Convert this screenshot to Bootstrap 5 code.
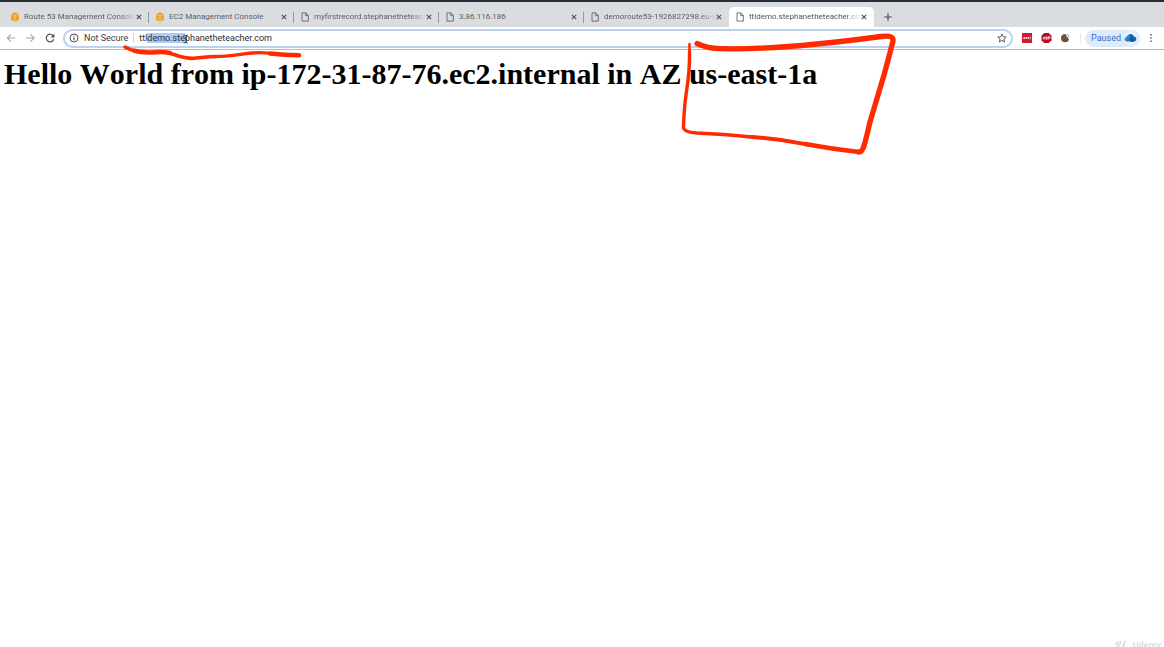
<!DOCTYPE html>
<html lang="en">
<head>
<meta charset="utf-8">
<meta name="viewport" content="width=device-width, initial-scale=1">
<title>ttldemo.stephanetheteacher.com</title>
<link href="https://cdn.jsdelivr.net/npm/bootstrap@5.3.0/dist/css/bootstrap.min.css" rel="stylesheet">
<style>
body { font-family: Roboto, "Liberation Sans", sans-serif; font-size: 9px; line-height: 12px; color: #3c4043; background: #fff; overflow: hidden; }
svg { display: block; flex: none; }
button { border: 0; background: none; padding: 0; color: inherit; }
.tabstrip { border-top: 2px solid #282e39; background: #dadde0; height: 27px; padding: 5px 0 0 4px; }
.browser-tab { flex: 0 1 145px; min-width: 0; height: 20px; padding: 0 7px 0 6px; position: relative; color: #5a5e62; font-size: 8px; }
.browser-tab.divided::after { content: ""; position: absolute; right: 0; top: 5px; width: 1px; height: 11px; background: #93979b; }
.browser-tab.current { background: #fff; border-radius: 5px 5px 0 0; color: #505458; }
.tab-label { flex: 1; min-width: 0; text-align: left; margin-left: 4px; overflow: hidden; white-space: nowrap; }
.tab-label.faded { -webkit-mask-image: linear-gradient(90deg, #000 86%, transparent); mask-image: linear-gradient(90deg, #000 86%, transparent); }
.toolbar { height: 23px; border-bottom: 1px solid #b9bbbe; padding: 0 10px 0 6px; }
.nav-gap { margin-left: 10px; }
.omnibox { height: 19px; border: 2px solid #bcd2ee; border-radius: 10px; padding: 0 4px; margin-left: 8px; }
.omnibox input { border: 0; outline: 0; padding: 0; height: 14px; background: none; color: #2c2f33; min-width: 0; }
.omnibox input::selection { background: #a9cdf8; color: #2c2f33; }
.omnibox label { margin-left: 5px; }
.rule { width: 1px; height: 10px; margin: 0 5px; background: #d3d5d8; }
.rule.faint { margin: 0 4px 0 10px; background: #e4e6e8; }
.profile { height: 17px; border-radius: 9px; background: #dfeafb; color: #2f6fd0; padding: 0 2px 0 6px; gap: 2px; }
.page-title { font: bold 30px/34px "Liberation Serif", serif; font-kerning: none; color: #000; padding: 7px 4px 0; margin: 0; white-space: nowrap; }
.drawing { position: absolute; left: 0; top: 0; pointer-events: none; }
.watermark { position: fixed; right: 3px; bottom: -4px; color: #dcdcdc; font: bold 8px/12px "Open Sans", sans-serif; }
</style>
</head>
<body>
<svg width="0" height="0" class="position-absolute" aria-hidden="true">
  <symbol id="cube" viewBox="0 0 10 10"><path d="M1 2 5 .5 9 2v6L5 9.500 1 8z" fill="#eda52c"/><path d="M1 2.300 5 3.400 9 2.300M5 3.400v6" stroke="#f8ce78" stroke-width=".8" fill="none"/><path d="M3 1.400 7 2.800M7 1.400 3 2.800" stroke="#d58c1c" stroke-width=".5"/></symbol>
  <symbol id="file" viewBox="0 0 10 10"><path d="M2 .9h3.800L8.300 3.400v5.700H2zM5.700 1v2.600h2.500" fill="none" stroke="#606468" stroke-width=".9"/></symbol>
  <symbol id="close" viewBox="0 0 6 6"><path d="M.8.8l4.400 4.400M5.200.8.8 5.200" stroke="#4e5256" stroke-width="1.100"/></symbol>
</svg>
<header>
  <nav class="tabstrip d-flex" aria-label="Open tabs">
    <div class="browser-tab divided d-flex align-items-center"><svg width="10" height="10"><use href="#cube"/></svg><button class="tab-label faded">Route 53 Management Console</button><button aria-label="Close tab"><svg width="6" height="6"><use href="#close"/></svg></button></div>
    <div class="browser-tab divided d-flex align-items-center"><svg width="10" height="10"><use href="#cube"/></svg><button class="tab-label">EC2 Management Console</button><button aria-label="Close tab"><svg width="6" height="6"><use href="#close"/></svg></button></div>
    <div class="browser-tab divided d-flex align-items-center"><svg width="10" height="10"><use href="#file"/></svg><button class="tab-label faded">myfirstrecord.stephanetheteacher.com</button><button aria-label="Close tab"><svg width="6" height="6"><use href="#close"/></svg></button></div>
    <div class="browser-tab divided d-flex align-items-center"><svg width="10" height="10"><use href="#file"/></svg><button class="tab-label">3.86.116.186</button><button aria-label="Close tab"><svg width="6" height="6"><use href="#close"/></svg></button></div>
    <div class="browser-tab d-flex align-items-center"><svg width="10" height="10"><use href="#file"/></svg><button class="tab-label faded">demoroute53-1926827298.eu-west-1</button><button aria-label="Close tab"><svg width="6" height="6"><use href="#close"/></svg></button></div>
    <div class="browser-tab current d-flex align-items-center"><svg width="10" height="10"><use href="#file"/></svg><button class="tab-label faded" aria-current="page">ttldemo.stephanetheteacher.com</button><button aria-label="Close tab"><svg width="6" height="6"><use href="#close"/></svg></button></div>
    <button class="nav-gap" aria-label="New tab"><svg width="8" height="8" viewBox="0 0 8 8"><path d="M4 .3v7.400M.3 4h7.400" stroke="#484c50" stroke-width="1.200"/></svg></button>
  </nav>
  <div class="toolbar d-flex align-items-center">
    <button aria-label="Back"><svg width="10" height="10" viewBox="0 0 10 10"><path d="M9.300 5H1.500M5 1.300 1.300 5 5 8.700" fill="none" stroke="#a5a8ab" stroke-width="1.100"/></svg></button>
    <button class="nav-gap" aria-label="Forward"><svg width="9" height="10" viewBox="0 0 9 10"><path d="M.2 5h7.800M4.500 1.300 8.200 5 4.500 8.700" fill="none" stroke="#a5a8ab" stroke-width="1.100"/></svg></button>
    <button class="nav-gap" aria-label="Reload"><svg width="10" height="10" viewBox="0 0 10 10"><path d="M8.300 3A3.800 3.800 0 1 0 8.700 6.200" fill="none" stroke="#4d5155" stroke-width="1.200"/><path d="M9.400.7v3.700H5.700z" fill="#4d5155"/></svg></button>
    <div class="omnibox flex-grow-1 d-flex align-items-center">
      <svg width="10" height="10" viewBox="0 0 10 10"><circle cx="5" cy="5" r="4" fill="none" stroke="#4d5155"/><path d="M5 4.300v3M5 2.400v1.100" stroke="#4d5155" stroke-width="1.100"/></svg>
      <label for="url" class="text-nowrap">Not Secure</label>
      <span class="rule"></span>
      <input id="url" class="flex-grow-1" type="text" value="ttldemo.stephanetheteacher.com" spellcheck="false">
      <button aria-label="Bookmark this page"><svg width="10" height="10" viewBox="0 0 10 10"><path d="M5 .9l1.200 2.800 3 .3-2.300 2 .7 3L5 7.400 2.400 9l.7-3L.8 4l3-.3z" fill="none" stroke="#4d5155" stroke-width=".9"/></svg></button>
    </div>
    <div class="d-flex align-items-center ms-2 gap-2">
      <button aria-label="Password manager"><svg width="12" height="10" viewBox="0 0 12 10"><path d="M1 0h10v10H1z" fill="#cf1b2e"/><path d="M2.500 5h5.500" stroke="#fff" stroke-width="1.500" stroke-dasharray="1.500 .5"/><path d="M9.200 3.500v3" stroke="#fff" stroke-width=".7"/></svg></button>
      <button aria-label="Ad blocker"><svg width="11" height="10" viewBox="0 0 11 10"><path d="M3.200 0h4.600l2.700 2.700v4.600L7.800 10H3.200L.5 7.300V2.700z" fill="#b70d20"/><path d="M2 6.400 3 3.800l1 2.600M5 3.800v2.400h1V3.800zM7.200 6.500V3.800H9v1.400H7.500" fill="none" stroke="#fff" stroke-width=".8"/></svg></button>
      <button aria-label="Cookies"><svg width="10" height="10" viewBox="0 0 10 10"><path d="M5.200.9a4.200 4.200 0 1 0 4 5.400L7.800 5.500 8.600 4.200 6.500 4 6.700 2.300z" fill="#72563b"/><path d="M7.500 1.500h1v1h-1zM8.400 3.300h.8v.8h-.8z" fill="#72563b"/><circle cx="3" cy="4" r=".6" fill="#4a3826"/><circle cx="5" cy="7" r=".6" fill="#4a3826"/></svg></button>
    </div>
    <span class="rule faint"></span>
    <button class="profile d-flex align-items-center"><span>Paused</span><svg width="15" height="14" viewBox="0 0 15 14"><circle cx="7.500" cy="7" r="6.500" fill="#edf3fc"/><path d="M3.500 10.500a2.300 2.300 0 0 1-.2-4.500Q4.500 3 7.300 3.200v7.300z" fill="#318bd0"/><path d="M6.500 3.200Q10 2.400 11 5.600q2.600.4 2.300 2.700-.3 2.200-2.300 2.200H6.500z" fill="#1666ae"/><path d="M5 10.500V7.500M8.300 10.500V6l2 4.500z" fill="#184d7b" stroke="#184d7b" stroke-width=".6"/></svg></button>
    <button class="ms-2" aria-label="Menu"><svg width="6" height="10" viewBox="0 0 6 10"><path d="M2.300 1h1.400v1.400H2.300zM2.300 4.300h1.400v1.400H2.300zM2.300 7.600h1.400V9H2.300z" fill="#505458"/></svg></button>
  </div>
</header>
<main>
  <h1 class="page-title">Hello World from ip-172-31-87-76.ec2.internal in AZ us-east-1a</h1>
</main>
<svg class="drawing" width="900" height="160" viewBox="0 0 900 160" aria-hidden="true">
  <g fill="none" stroke="#ff2a00" stroke-linecap="round" stroke-linejoin="round">
    <path d="M125 47Q130 50 137 51.500" stroke-width="3.500"/>
    <path d="M134 50.700Q142 53 152 52.500Q163 51.500 170 53" stroke-width="4.500"/>
    <path d="M168 52.700C177 55 183 59 194 58.300Q203 57 216 56.500" stroke-width="3.600"/>
    <path d="M214 56.600C235 56.500 245 52.500 260 52.700Q266 52.800 274 54" stroke-width="3.300"/>
    <path d="M270 53.500Q284 55 299 55.200" stroke-width="4.500"/>
    <path d="M697 43.500Q708 48.500 720 48.700C770 50 825 44 881 36.500Q894 34.500 893 41Q889 57 884 75Q878 95 870 122C865 142 864 152 859 152" stroke-width="5.300"/>
    <path d="M859 152Q832 149 805 144" stroke-width="4.400"/>
    <path d="M807 144.300Q781 139 752 137" stroke-width="3.900"/>
    <path d="M754 137.200Q722 134 697 133Q683 132 683.500 127Q684 109 686 95Q690 70 689.500 52" stroke-width="3.400"/>
    <path d="M689.500 55V44" stroke-width="2.600"/>
  </g>
  <path d="M183.500 35h1.500l1 1 1-1h1M186 36v6M183.500 43h1.500l1-1 1 1h1M185 39h2" fill="none" stroke="#222" stroke-width=".8"/>
</svg>
<div class="watermark d-flex align-items-center gap-1"><svg width="15" height="12" viewBox="0 0 15 12"><path d="M1 5l3-2-2 7M7 2 4.500 9q0 2 2 1.500Q9 10 11 1.500L9 10h3" fill="none" stroke="#dedede" stroke-width="1.500"/></svg><span>Udemy</span></div>
<script src="https://cdn.jsdelivr.net/npm/bootstrap@5.3.0/dist/js/bootstrap.bundle.min.js"></script>
<script>
const url = document.getElementById('url');
url.focus();
url.setSelectionRange(3, 11);
</script>
</body>
</html>
